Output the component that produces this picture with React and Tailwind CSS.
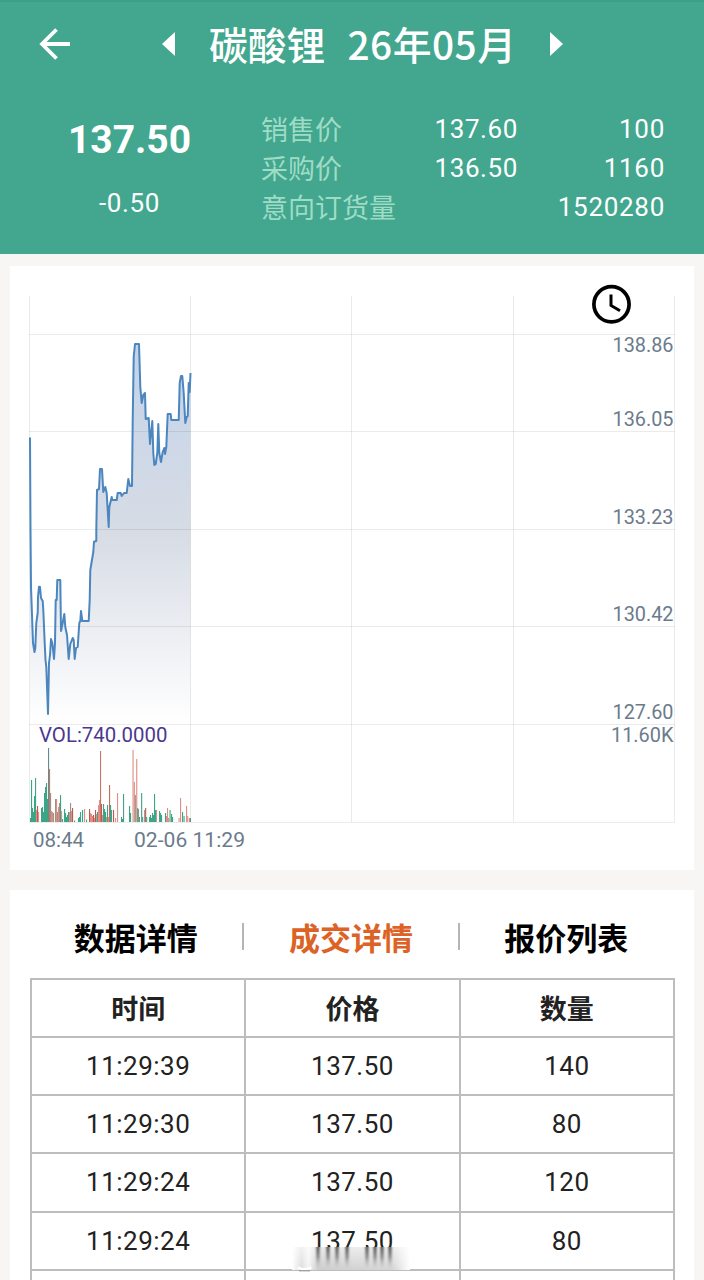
import React from "react";

const quotes = [
  { label: "销售价", price: "137.60", amount: "100" },
  { label: "采购价", price: "136.50", amount: "1160" },
  { label: "意向订货量", price: "", amount: "1520280" },
];

const tabs = ["数据详情", "成交详情", "报价列表"];

const trades = [
  ["11:29:39", "137.50", "140"],
  ["11:29:30", "137.50", "80"],
  ["11:29:24", "137.50", "120"],
  ["11:29:24", "137.50", "80"],
  ["", "", ""],
];

const axisLabels = [
  { y: 352, text: "138.86" },
  { y: 426, text: "136.05" },
  { y: 524, text: "133.23" },
  { y: 621, text: "130.42" },
  { y: 719, text: "127.60" },
];

const pricePoints =
  "30,437.5 30.5,530 31,587 33,643 34.5,652 35.3,648 36.3,623 37.7,613 38,597 39,586.7 40,587 41,598 42.7,601 43.3,610 44.7,643 45.5,660 46.3,667 48,714 49,663 50,655 51,639 52.3,643 54,659 55,643 55.7,600 56.7,600 57.3,580 60.3,580 61,631 62.7,623 64.3,614 65.3,627 67,635 68.7,659 70.3,644 72.7,638 73.7,640 74.7,659 76,648 77.7,647 79.3,623 80.3,621 81,611 82.3,621 88.7,621 89.7,600 90.3,570 93.3,552 94,541.7 96.3,541 96.3,530 97,490 99,489 100,469 102,469 103.3,492 105.3,487 106.7,493 108.7,527 109.3,507 111.7,497 112.3,500 116.7,500 117.7,493 120.7,493 121.7,496 124,493 126.7,493 128.3,479 130,486 132,486 132.7,420 133.7,357 135,344 139,344 140.3,387 141.7,403 143.3,395 145,393 145.7,419 148.7,418 150,444 152.3,421 153.3,453 154.3,465 155.7,464 157.3,453 158.3,424 159.3,453 161,462 162.7,452 164.3,448 165,454 166.3,447 167.7,414 170.7,414 171.3,420 178.7,420 179.7,383 181,376 182.3,376 183.7,393 185.3,423 186.7,417 187.7,416 188.7,383 189.7,392 190.5,373";

const UP = "#e08d86";
const DOWN = "#3ba585";
const MIXED = "#9c9284";

// x, height, colour
const volumes = [
  [30.5, 4, DOWN], [31.5, 42, DOWN], [32.5, 14, DOWN], [33.5, 10, DOWN], [34.5, 26, DOWN],
  [35.5, 44, DOWN], [36.5, 12, UP], [37.5, 16, "#c2584d"], [38.5, 10, UP], [41.5, 14, DOWN],
  [42.5, 15, DOWN], [43.5, 10, DOWN], [44.5, 29, DOWN], [45.5, 35, DOWN], [46.5, 39, DOWN],
  [47.5, 23, DOWN], [48.5, 74, "#668b8b"], [49.5, 53, "#bd7a6c"], [50.5, 29, MIXED], [51.5, 11, UP],
  [52.5, 10, UP], [53.5, 9, MIXED], [55.5, 23, MIXED], [56.5, 23, UP], [57.5, 10, MIXED],
  [58.5, 15, UP], [59.5, 19, MIXED], [60.5, 27, DOWN], [61.5, 11, UP], [62.5, 3, DOWN],
  [64.5, 13, DOWN], [65.5, 9, DOWN], [66.5, 5, DOWN], [67.5, 7, DOWN], [68.5, 10, DOWN],
  [69.5, 10, UP], [70.5, 19, MIXED], [71.5, 11, UP], [72.5, 14, "#c2584d"], [74.5, 1.5, DOWN],
  [78.5, 4, DOWN], [79.5, 5, DOWN], [80.5, 10, DOWN], [82.5, 12, DOWN], [84.5, 13, UP],
  [86.5, 2.5, DOWN], [89.5, 13, "#c2584d"], [90.5, 9, UP], [91.5, 8, UP], [92.5, 6, UP],
  [93.5, 7, "#c2584d"], [94.5, 4, UP], [95.5, 12, "#c2584d"], [96.5, 8, UP], [97.5, 10, DOWN],
  [98.5, 17, UP], [99.5, 22, UP], [100.5, 71, "#cf7069"], [101.5, 18, "#c2584d"], [102.5, 7, UP],
  [103.5, 18, DOWN], [104.5, 13, DOWN], [105.5, 10, DOWN], [106.5, 5, UP], [107.5, 17, DOWN],
  [108.5, 5, UP], [109.5, 37, "#c76a62"], [110.5, 17, DOWN], [111.5, 12, DOWN], [113.5, 12, "#c2584d"],
  [115.5, 4, UP], [117.5, 29, UP], [121.5, 5, DOWN], [122.5, 3, DOWN], [123.5, 28, DOWN],
  [129.5, 16, DOWN], [130.5, 9, DOWN], [133, 72, UP], [134.3, 40, UP], [135.3, 27, MIXED],
  [136.7, 63, UP], [137.6, 14, DOWN], [138.4, 13, MIXED], [139.4, 5, DOWN], [141.6, 29, DOWN],
  [142.6, 5, DOWN], [144.6, 12, MIXED], [145.6, 14, "#c2584d"], [146.6, 5, DOWN], [149.5, 5, DOWN],
  [150.5, 7, DOWN], [151.5, 4, DOWN], [152.5, 9, DOWN], [153.5, 7, DOWN], [154.5, 28, DOWN],
  [155.5, 12, DOWN], [156.5, 12, UP], [159.5, 11, DOWN], [160.5, 9, DOWN], [161.5, 7, DOWN],
  [165.5, 9, DOWN], [166.5, 6, UP], [167.5, 14, UP], [168.5, 4, UP], [170, 12, DOWN],
  [171.5, 8, DOWN], [172.5, 5, DOWN], [179, 4, UP], [180.5, 24, UP], [182.5, 10, DOWN],
  [184, 6, DOWN], [186.5, 16, UP], [187.7, 6, UP], [189.4, 4, UP], [190.4, 4, DOWN],
];

const Header = () => (
  <header className="h-[254px] border-t-2 border-[#3f9e86] bg-[#42a78e] text-white">
    <div className="flex h-[84px] items-center pl-[39px]">
      <svg width="32" height="32" viewBox="0 0 32 32" fill="none" stroke="currentColor" strokeWidth="3.8">
        <path d="M31 16H3M17.5 1.5L3 16L17.5 30.5" />
      </svg>
      <svg className="ml-[91px]" width="13" height="24" viewBox="0 0 13 24" fill="currentColor">
        <path d="M13 0V24L0 12Z" />
      </svg>
      <h1 className="ml-[34px] flex w-[307px] gap-[22px] pb-[3px] text-[38.8px] leading-[56px] font-medium whitespace-nowrap">
        <span>碳酸锂</span>
        <span className="tracking-[0.5px]">26年05月</span>
      </h1>
      <svg className="ml-[34px]" width="13" height="24" viewBox="0 0 13 24" fill="currentColor">
        <path d="M0 0V24L13 12Z" />
      </svg>
    </div>
    <div className="flex">
      <div className="flex w-[259px] flex-col items-center pt-[30px] font-[Roboto]">
        <span className="text-[39px] leading-[48px] font-bold">137.50</span>
        <span className="mt-6 text-[26px] leading-[30px] tracking-[0.6px]">-0.50</span>
      </div>
      <div className="flex flex-1 flex-col pt-[23px] pr-[39px] pl-[2px]">
        {quotes.map((q) => (
          <div key={q.label} className="flex h-[39px] items-center text-[26px]">
            <span className="w-[137px] text-[27px] leading-[39px] whitespace-nowrap text-[#9fdcc6]">{q.label}</span>
            <span className="w-[120px] text-right font-[Roboto] leading-[36px] tracking-[0.6px]">{q.price}</span>
            <span className="flex-1 text-right font-[Roboto] leading-[36px] tracking-[0.7px]">{q.amount}</span>
          </div>
        ))}
      </div>
    </div>
  </header>
);

const PriceChart = () => (
  <svg className="block font-[Roboto]" width="684" height="604" viewBox="10 266 684 604">
    <defs>
      <linearGradient id="area" x1="0" y1="344" x2="0" y2="724" gradientUnits="userSpaceOnUse">
        <stop offset="0" stopColor="#c3d3ea" />
        <stop offset="0.5" stopColor="#d7dce5" />
        <stop offset="1" stopColor="#ffffff" />
      </linearGradient>
    </defs>
    <polygon points={`30,724 ${pricePoints} 190.5,724`} fill="url(#area)" />
    <g stroke="#000000" strokeOpacity="0.08">
      {[29.5, 190.5, 351.5, 513.5, 674.5].map((x) => (
        <line key={x} x1={x} x2={x} y1="296" y2="822" />
      ))}
      {[334.5, 431.5, 529.5, 626.5, 724.5, 822.5].map((y) => (
        <line key={y} x1="29" x2="675" y1={y} y2={y} />
      ))}
    </g>
    <polyline points={pricePoints} fill="none" stroke="#4c86bf" strokeWidth="2" strokeLinejoin="round" />
    {volumes.map(([x, h, color]) => (
      <rect key={x} x={x - 0.5} y={822 - h} width="1.1" height={h} fill={color} />
    ))}
    <g fill="#6b7b8c" fontSize="21">
      {axisLabels.map((l) => (
        <text key={l.y} x="612.5" y={l.y} textLength="61" lengthAdjust="spacingAndGlyphs">{l.text}</text>
      ))}
      <text x="611" y="742" textLength="62.5" lengthAdjust="spacingAndGlyphs">11.60K</text>
      <text x="33" y="847" textLength="51" lengthAdjust="spacingAndGlyphs">08:44</text>
      <text x="134" y="847" textLength="111" lengthAdjust="spacingAndGlyphs">02-06 11:29</text>
    </g>
    <text x="39" y="742" fontSize="21" fill="#4a3890" textLength="128.5" lengthAdjust="spacingAndGlyphs">
      VOL:740.0000
    </text>
    <g fill="none" stroke="#000000">
      <circle cx="611.5" cy="304.3" r="17.6" strokeWidth="3.7" />
      <path d="M611 294.500V305.500L620 310.800" strokeWidth="3" />
    </g>
  </svg>
);

const TradeTable = () => (
  <table className="ml-px w-[645px] table-fixed border-collapse text-center text-[#222222]">
    <thead>
      <tr className="h-[57.5px]">
        {["时间", "价格", "数量"].map((t) => (
          <th key={t} className="border-2 border-[#bdbdbd] p-0 text-[27px] leading-[40px] font-bold">{t}</th>
        ))}
      </tr>
    </thead>
    <tbody>
      {trades.map((row, i) => (
        <tr key={i} className="h-[58.4px]">
          {row.map((cell, j) => (
            <td key={j} className="border-2 border-[#bdbdbd] p-0 font-[Roboto] text-[26px] leading-[36px] tracking-[0.5px]">
              {cell}
            </td>
          ))}
        </tr>
      ))}
    </tbody>
  </table>
);

const App = () => {
  return (
    <div className="relative h-[1280px] w-[704px] overflow-hidden bg-[#f7f6f5] font-['Noto_Sans_CJK_SC',sans-serif]">
      <Header />
      <section className="mx-[10px] mt-3 h-[604px] bg-white">
        <PriceChart />
      </section>
      <section className="mx-[10px] mt-5 bg-white px-[19px]">
        <div className="flex h-[88px] w-[644px] items-center pt-1.5">
          {tabs.map((tab, i) => (
            <React.Fragment key={tab}>
              {i > 0 && <span className="h-[27px] w-0.5 -translate-y-px bg-[#b5b5b5]" />}
              <span
                className={
                  "flex-1 text-center text-[31px] leading-[44px] font-bold " +
                  (i === 1 ? "text-[#dc6226]" : "text-black")
                }
              >
                {tab}
              </span>
            </React.Fragment>
          ))}
        </div>
        <TradeTable />
      </section>
      {/* streaked pill over the last visible row */}
      <svg className="absolute top-[1247px] left-[290px]" width="122" height="25" viewBox="0 0 122 25">
        <defs>
          <linearGradient id="pill">
            <stop offset="0" stopColor="#fff" />
            <stop offset="0.08" stopColor="#ddd" />
            <stop offset="0.14" stopColor="#f4f4f4" />
            <stop offset="0.22" stopColor="#ccc" />
            <stop offset="0.55" stopColor="#d2d2d2" />
            <stop offset="0.85" stopColor="#d4d4d4" />
            <stop offset="1" stopColor="#fff" />
          </linearGradient>
          <linearGradient id="streak" x1="0" y1="0" x2="0" y2="1">
            <stop offset="0" stopColor="#444" />
            <stop offset="0.5" stopColor="#888" />
            <stop offset="1" stopColor="#ccc" stopOpacity="0.3" />
          </linearGradient>
          <linearGradient id="shine" x1="0" y1="0" x2="0" y2="1">
            <stop offset="0" stopColor="#fff" stopOpacity="0.6" />
            <stop offset="1" stopColor="#fff" stopOpacity="0" />
          </linearGradient>
          <filter id="smear">
            <feGaussianBlur stdDeviation="0.9 0" />
          </filter>
        </defs>
        <rect x="2" width="118" height="23" fill="url(#pill)" />
        <rect x="2" width="118" height="23" fill="url(#shine)" />
        <g filter="url(#smear)">
          {[27, 37, 46, 56, 76, 84, 91, 99].map((x) => (
            <rect key={x} x={x - 0.5} width="3" height="21" fill="url(#streak)" />
          ))}
        </g>
        <path d="M8 20C10 23 19 23 21 20" fill="none" stroke="#fff" strokeWidth="2.500" />
        <path d="M9 23.800H20" fill="none" stroke="#888" />
      </svg>
    </div>
  );
};

export default App;
